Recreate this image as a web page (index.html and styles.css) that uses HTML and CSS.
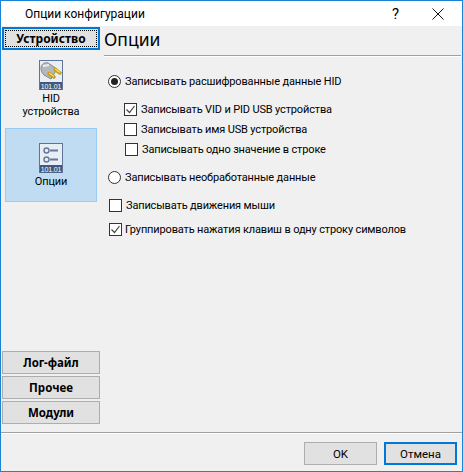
FILE: index.html
```html
<!DOCTYPE html>
<html>
<head>
    <link rel="stylesheet" href="styles.css">
</head>
<body>
<div class="window">
    <div class="titlebar">
        <span class="title">Опции конфигурации</span>
        <span class="help">?</span>
        <svg class="close" width="12" height="12" viewBox="0 0 12 12"><path d="M0.5 0.5L11.5 11.5M11.5 0.5L0.5 11.5" stroke="#111" stroke-width="1" fill="none"/></svg>
    </div>

    <div class="content">
        <!-- Left navigation -->
        <div class="sidebar">
            <button class="nav-button active"><span class="focus">Устройство</span></button>
            <div class="nav-items">
                <div class="nav-item">
                    <svg class="nav-icon" width="24" height="30" viewBox="0 0 24 30">
                        <rect x="0.5" y="0.500" width="23" height="29" fill="#e9edf4" stroke="#5f7499"/>
                        <rect x="1" y="22" width="22" height="7.500" fill="#41587f"/>
                        <path d="M2 8C2 4 6 2 9 3L18 9L12 19L5 15C3 13 2 11 2 8Z" fill="#b4b7bb" stroke="#85888d"/>
                        <path d="M4 6L10 5" stroke="#eceded" stroke-width="2"/>
                        <path d="M10 13.500L15 17M16 9.500L21 13" stroke="#c79a14" stroke-width="3.400" stroke-linecap="round"/>
                        <path d="M10 13L15 16.500M16 9L21 12.500" stroke="#f8e56c" stroke-width="1.200"/>
                        <text x="12" y="28.500" class="icon-bits">101.01</text>
                    </svg>
                    <span>HID<br>устройства</span>
                </div>
                <div class="nav-item selected">
                    <svg class="nav-icon" width="24" height="30" viewBox="0 0 24 30">
                        <rect x="0.5" y="0.500" width="23" height="29" fill="#e9edf4" stroke="#5f7499"/>
                        <rect x="1" y="22" width="22" height="7.500" fill="#41587f"/>
                        <circle cx="7.500" cy="7.500" r="2.500" fill="none" stroke="#65799c" stroke-width="1.400"/>
                        <circle cx="7.500" cy="16.500" r="2.500" fill="none" stroke="#65799c" stroke-width="1.400"/>
                        <path d="M11 7.500H19M11 16.500H19" stroke="#65799c" stroke-width="2"/>
                        <text x="12" y="28.500" class="icon-bits">101.01</text>
                    </svg>
                    <span>Опции</span>
                </div>
            </div>
            <button class="nav-button">Лог-файл</button>
            <button class="nav-button">Прочее</button>
            <button class="nav-button">Модули</button>
        </div>

        <!-- Options page -->
        <div class="page">
            <h1 class="page-title">Опции</h1>
            <div class="options">
                <div class="opt opt-first"><span class="radio checked"></span>Записывать расшифрованные данные HID</div>
                <div class="opt opt-sub opt-gap-b"><span class="check checked"><svg width="11" height="11" viewBox="0 0 11 11"><path d="M1.500 5.500L4.500 8.500L9.500 2" fill="none" stroke="#444" stroke-width="1.200"/></svg></span>Записывать VID и PID USB устройства</div>
                <div class="opt opt-sub opt-gap-a"><span class="check"></span>Записывать имя USB устройства</div>
                <div class="opt opt-sub opt-shift opt-gap-a"><span class="check"></span>Записывать одно значение в строке</div>
                <div class="opt opt-gap-b"><span class="radio"></span>Записывать необработанные данные</div>
                <div class="opt opt-shift opt-gap-b"><span class="check"></span>Записывать движения мыши</div>
                <div class="opt opt-shift opt-tight opt-gap-c"><span class="check checked"><svg width="11" height="11" viewBox="0 0 11 11"><path d="M1.500 5.500L4.500 8.500L9.500 2" fill="none" stroke="#444" stroke-width="1.200"/></svg></span>Группировать нажатия клавиш в одну строку символов</div>
            </div>
        </div>
    </div>

    <div class="footer">
        <button class="btn">OK</button>
        <button class="btn default">Отмена</button>
    </div>
</div>
</body>
</html>
```
FILE: styles.css
```css
html, body {
    margin: 0;
    padding: 0;
}
body {
    width: 463px;
    height: 472px;
    font-family: Roboto, sans-serif;
    font-size: 11px;
    letter-spacing: -0.15px;
    color: #000;
    overflow: hidden;
}
.window {
    box-sizing: border-box;
    width: 463px;
    height: 472px;
    display: flex;
    flex-direction: column;
    background-color: #f0f0f0;
    border: 1px solid #1883d7;
}
.titlebar {
    height: 25px;
    flex: none;
    display: flex;
    align-items: center;
    background-color: #fff;
}
.title {
    margin-left: 24px;
    flex: 1;
    font-size: 12px;
    letter-spacing: 0;
}
.help {
    font-size: 15px;
    width: 40px;
}
.close {
    margin-right: 18px;
}
.content {
    flex: 1;
    display: flex;
    min-height: 0;
}
.sidebar {
    width: 103px;
    flex: none;
    display: flex;
    flex-direction: column;
    gap: 2px;
    padding: 1px 0 8px 1px;
    box-sizing: border-box;
}
.nav-button {
    width: 98px;
    height: 23px;
    padding: 0;
    flex: none;
    font-family: "Noto Sans", sans-serif;
    font-size: 11.5px;
    font-weight: bold;
    color: #000;
    background-color: #e1e1e1;
    border: 1px solid #adadad;
}
.nav-button.active {
    font-size: 12px;
    border: 2px solid #0078d7;
    padding: 1px;
}
.focus {
    display: block;
    height: 100%;
    line-height: 15px;
    box-sizing: border-box;
    border: 1px dotted #000;
}
.nav-items {
    flex: 1;
    display: flex;
    flex-direction: column;
    align-items: center;
    padding-right: 4px;
    gap: 6px;
}
.nav-item {
    width: 92px;
    height: 70px;
    display: flex;
    flex-direction: column;
    align-items: center;
    text-align: center;
    line-height: 13px;
    padding-top: 8px;
    box-sizing: border-box;
}
.nav-icon {
    display: block;
    margin-bottom: 2px;
}
.icon-bits {
    font-size: 7px;
    font-family: "Liberation Sans", sans-serif;
    fill: #fff;
    text-anchor: middle;
}
.nav-item.selected {
    height: 74px;
    padding-top: 14px;
    background-color: #bfdcf2;
    border: 1px solid #99ccf5;
}
.page {
    flex: 1;
    padding-top: 1px;
    min-width: 0;
}
.page-title {
    margin: 0 1px 0 0;
    font-family: "Noto Sans", sans-serif;
    font-size: 17.5px;
    font-weight: normal;
    letter-spacing: 0;
    line-height: 24px;
    height: 28px;
    color: #000;
    border-bottom: 1px solid #a0a0a0;
    box-shadow: 0 1px 0 #fff;
}
.options {
    padding-left: 4px;
}
.opt {
    display: flex;
    align-items: center;
    height: 14px;
    gap: 4px;
    white-space: nowrap;
}
.opt-first { margin-top: 18px; }
.opt-sub { padding-left: 16px; }
.opt-shift { margin-left: 1px; }
.opt-tight { gap: 3px; }
.opt-gap-a { margin-top: 6px; }
.opt-gap-b { margin-top: 14px; }
.opt-gap-c { margin-top: 10px; }
.check, .radio {
    box-sizing: border-box;
    width: 13px;
    height: 13px;
    flex: none;
    border: 1px solid #333;
    background-color: #fff;
    display: flex;
    align-items: center;
    justify-content: center;
}
.radio {
    border-radius: 50%;
}
.radio.checked::after {
    content: "";
    width: 7px;
    height: 7px;
    border-radius: 50%;
    background-color: #222;
}
.footer {
    height: 39px;
    flex: none;
    box-sizing: border-box;
    display: flex;
    justify-content: flex-end;
    align-items: flex-start;
    gap: 7px;
    padding: 9px 5px 0 0;
    border-top: 1px solid #a0a0a0;
    box-shadow: inset 0 1px 0 #fff;
}
.btn {
    width: 73px;
    height: 23px;
    padding: 0;
    font-family: Roboto, sans-serif;
    font-size: 11.5px;
    color: #000;
    background-color: #e1e1e1;
    border: 1px solid #adadad;
}
.btn.default {
    border: 2px solid #0078d7;
}
```
